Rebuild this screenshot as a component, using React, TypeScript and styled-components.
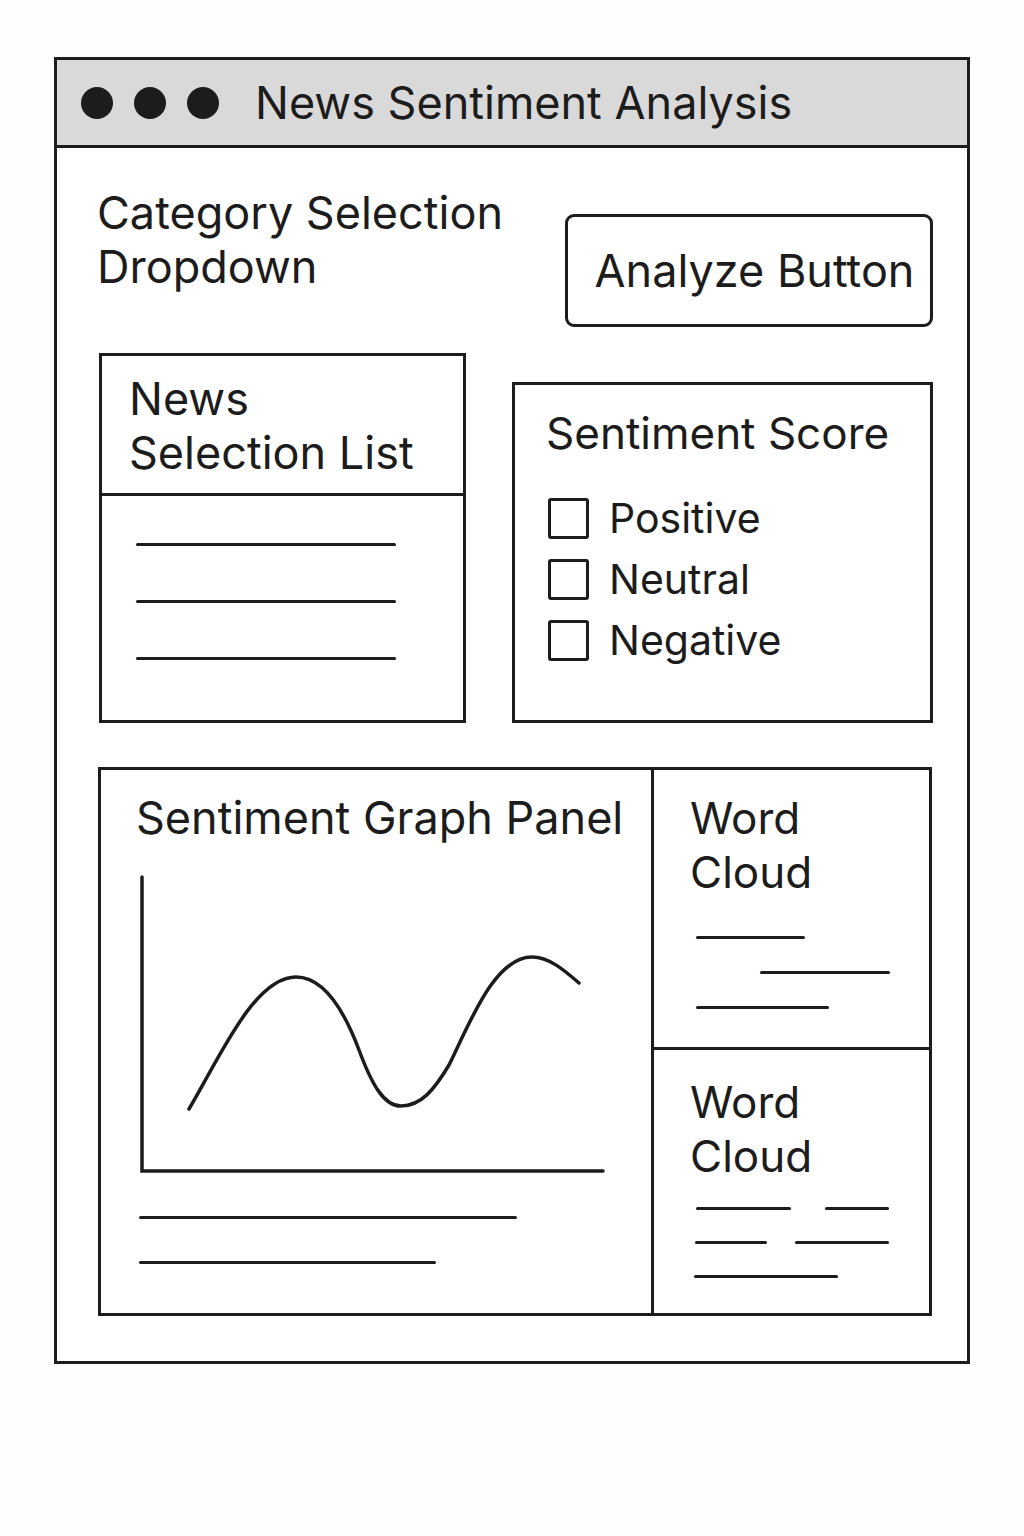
import React from 'react';
import styled, { createGlobalStyle } from 'styled-components';

const INK = '#1c1c1c';

const GlobalStyle = createGlobalStyle`
  body {
    margin: 0;
    background: #fdfdfd;
    font-family: Inter, "Noto Sans", "Liberation Sans", sans-serif;
    color: ${INK};
  }
`;

const Page = styled.div`
  padding: 57px 0 0 54px;
  height: 1536px;
  box-sizing: border-box;
`;

const Window = styled.div`
  width: 916px;
  height: 1307px;
  box-sizing: border-box;
  border: 3px solid ${INK};
  background: #fff;
  display: flex;
  flex-direction: column;
`;

const TitleBar = styled.div`
  height: 88px;
  box-sizing: border-box;
  border-bottom: 3px solid ${INK};
  background: #d9d9d9;
  display: flex;
  align-items: center;
  padding-left: 24px;
  gap: 21px;
`;

const Dot = styled.span`
  width: 32px;
  height: 32px;
  border-radius: 50%;
  background: ${INK};
  flex-shrink: 0;
`;

const Heading = styled.h1`
  margin: 0 0 0 15px;
  font-size: 45px;
  font-weight: 400;
  line-height: 54px;
`;

const Body = styled.div`
  padding: 38px 34px 0 40px;
  display: flex;
  flex-direction: column;
`;

const TopRow = styled.div`
  display: flex;
  justify-content: space-between;
  align-items: flex-start;
`;

const Label = styled.div<{ $size?: number }>`
  font-size: ${p => p.$size ?? 45}px;
  line-height: 54px;
  white-space: pre-line;
`;

const AnalyzeButton = styled.button`
  margin-top: 28px;
  width: 368px;
  height: 113px;
  box-sizing: border-box;
  border: 3px solid ${INK};
  border-radius: 9px;
  background: #fff;
  font-family: inherit;
  font-size: 45px;
  color: ${INK};
  padding: 0 0 0 11px;
  cursor: pointer;
`;

const MiddleRow = styled.div`
  margin-top: 26px;
  padding-left: 2px;
  display: flex;
  align-items: flex-end;
  gap: 46px;
`;

const Panel = styled.div<{ $w: number; $h: number }>`
  width: ${p => p.$w}px;
  height: ${p => p.$h}px;
  box-sizing: border-box;
  border: 3px solid ${INK};
  display: flex;
  flex-direction: column;
`;

const ListHeader = styled.div`
  height: 140px;
  box-sizing: border-box;
  border-bottom: 3px solid ${INK};
  padding: 16px 0 0 27px;
`;

const ListBody = styled.div`
  padding: 47px 0 0 34px;
  display: flex;
  flex-direction: column;
  gap: 54px;
`;

const Stroke = styled.div<{ $w: number }>`
  width: ${p => p.$w}px;
  height: 3px;
  border-radius: 2px;
  background: ${INK};
  flex-shrink: 0;
`;

const ScoreBody = styled.div`
  padding: 21px 0 0 31px;
`;

const Options = styled.div`
  margin-top: 38px;
  padding-left: 2px;
  display: flex;
  flex-direction: column;
  gap: 20px;
`;

const Option = styled.label`
  display: flex;
  align-items: center;
  gap: 20px;
  font-size: 41px;
  line-height: 41px;
`;

const Checkbox = styled.span`
  width: 41px;
  height: 41px;
  box-sizing: border-box;
  border: 3px solid ${INK};
  border-radius: 3px;
  flex-shrink: 0;
`;

const BottomPanel = styled.div`
  margin: 44px 0 0 1px;
  width: 834px;
  height: 549px;
  box-sizing: border-box;
  border: 3px solid ${INK};
  display: grid;
  grid-template-columns: 553px 1fr;
`;

const GraphPanel = styled.div`
  border-right: 3px solid ${INK};
  padding: 21px 0 0 35px;
  display: flex;
  flex-direction: column;
`;

const Chart = styled.svg`
  display: block;
  margin: 30px 0 0 3px;
`;

const Notes = styled.div`
  margin: 41px 0 0 3px;
  display: flex;
  flex-direction: column;
  gap: 42px;
`;

const CloudColumn = styled.div`
  display: grid;
  grid-template-rows: 280px 1fr;
`;

const CloudCell = styled.div<{ $top: number; $gap: number; $divider?: boolean }>`
  padding: ${p => p.$top}px 0 0 36px;
  border-bottom: ${p => (p.$divider ? `3px solid ${INK}` : 'none')};
  display: flex;
  flex-direction: column;
  & > div + div {
    margin-top: ${p => p.$gap}px;
  }
`;

const StrokeRow = styled.div<{ $indent: number; $gap?: number }>`
  display: flex;
  padding-left: ${p => p.$indent}px;
  gap: ${p => p.$gap ?? 0}px;
`;

const CloudWords = styled.div`
  margin-bottom: 2px;
`;

function SentimentChart() {
  return (
    <Chart width="466" height="300" viewBox="0 0 466 300" fill="none" stroke={INK} strokeLinecap="round">
      <path d="M3 2 V296 H464" strokeWidth="3.5" />
      <path
        d="M50 234 C80 184 115 102 157 102 C185 102 205 135 220 175 C233 210 245 231 262 231 C282 231 295 215 310 190 C330 150 355 82 393 82 C410 82 425 95 440 108"
        strokeWidth="3.5"
      />
    </Chart>
  );
}

export default function App() {
  return (
    <>
      <GlobalStyle />
      <Page>
        <Window>
          <TitleBar>
            <Dot />
            <Dot />
            <Dot />
            <Heading>News Sentiment Analysis</Heading>
          </TitleBar>
          <Body>
            <TopRow>
              <Label>{'Category Selection\nDropdown'}</Label>
              <AnalyzeButton>Analyze Button</AnalyzeButton>
            </TopRow>

            <MiddleRow>
              <Panel $w={367} $h={370}>
                <ListHeader>
                  <Label>{'News\nSelection List'}</Label>
                </ListHeader>
                <ListBody>
                  <Stroke $w={260} />
                  <Stroke $w={260} />
                  <Stroke $w={260} />
                </ListBody>
              </Panel>

              <Panel $w={421} $h={341}>
                <ScoreBody>
                  <Label $size={44}>Sentiment Score</Label>
                  <Options>
                    {['Positive', 'Neutral', 'Negative'].map(o => (
                      <Option key={o}>
                        <Checkbox />
                        {o}
                      </Option>
                    ))}
                  </Options>
                </ScoreBody>
              </Panel>
            </MiddleRow>

            <BottomPanel>
              <GraphPanel>
                <Label>Sentiment Graph Panel</Label>
                <SentimentChart />
                <Notes>
                  <Stroke $w={378} />
                  <Stroke $w={297} />
                </Notes>
              </GraphPanel>

              <CloudColumn>
                <CloudCell $top={21} $gap={32} $divider>
                  <CloudWords>
                    <Label $size={44}>{'Word\nCloud'}</Label>
                  </CloudWords>
                  <StrokeRow $indent={6} style={{ marginTop: 35 }}>
                    <Stroke $w={109} />
                  </StrokeRow>
                  <StrokeRow $indent={70}>
                    <Stroke $w={130} />
                  </StrokeRow>
                  <StrokeRow $indent={6}>
                    <Stroke $w={133} />
                  </StrokeRow>
                </CloudCell>
                <CloudCell $top={25} $gap={31}>
                  <CloudWords>
                    <Label $size={44}>{'Word\nCloud'}</Label>
                  </CloudWords>
                  <StrokeRow $indent={6} $gap={34} style={{ marginTop: 22 }}>
                    <Stroke $w={95} />
                    <Stroke $w={64} />
                  </StrokeRow>
                  <StrokeRow $indent={5} $gap={28}>
                    <Stroke $w={72} />
                    <Stroke $w={94} />
                  </StrokeRow>
                  <StrokeRow $indent={4}>
                    <Stroke $w={144} />
                  </StrokeRow>
                </CloudCell>
              </CloudColumn>
            </BottomPanel>
          </Body>
        </Window>
      </Page>
    </>
  );
}
